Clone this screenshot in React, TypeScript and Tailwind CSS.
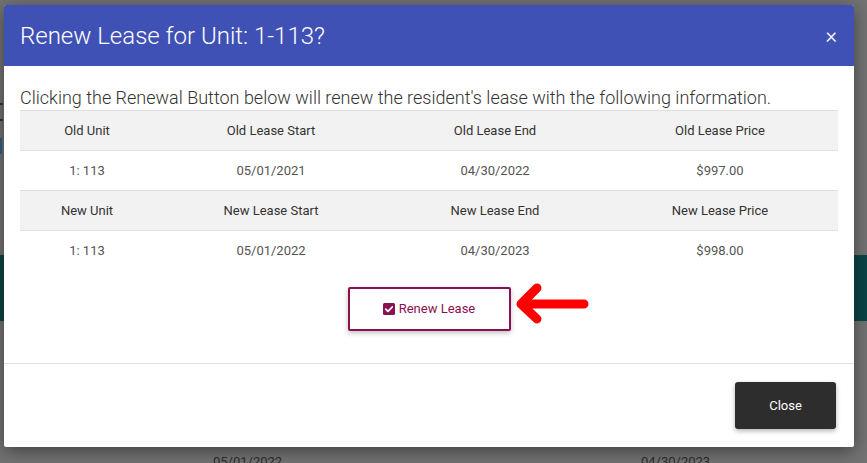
const oldRow = ['1: 113', '05/01/2021', '04/30/2022', '$997.00']
const newRow = ['1: 113', '05/01/2022', '04/30/2023', '$998.00']

function HeadRow({ cells }: { cells: string[] }) {
  return (
    <div className="grid grid-cols-[134px_234px_214px_236px] h-[40px] bg-[#f2f2f2] border-t border-[#dee0e6] items-center text-[13px] text-[#333]">
      {cells.map((c) => (
        <div key={c} className="text-center">{c}</div>
      ))}
    </div>
  )
}

function DataRow({ cells }: { cells: string[] }) {
  return (
    <div className="grid grid-cols-[134px_234px_214px_236px] h-[40px] border-t border-[#dee0e6] items-center text-[13px] text-[#555]">
      {cells.map((c, i) => (
        <div key={i} className="text-center">{c}</div>
      ))}
    </div>
  )
}

export default function App() {
  return (
    <div
      className="relative w-[867px] h-[463px] overflow-hidden bg-[#737373]"
      style={{ fontFamily: 'Roboto, "Liberation Sans", sans-serif' }}
    >
      {/* page behind the overlay */}
      <div className="absolute left-0 right-0 top-[255px] h-[66px] bg-[#0b4447]" />
      <div className="absolute left-0 top-[103px] w-[3px] h-[2px] bg-[#333]" />
      <div className="absolute left-0 top-[119px] w-[3px] h-[2px] bg-[#333]" />
      <div className="absolute left-0 top-[138px] w-[2px] h-[16px] bg-[#2f5f8a]" />
      <div className="absolute left-[213px] top-[452px] text-[13px] text-[#2c2c2c]">05/01/2022</div>
      <div className="absolute left-[641px] top-[452px] text-[13px] text-[#2c2c2c]">04/30/2023</div>

      {/* modal */}
      <div className="absolute left-[4px] top-[5px] w-[850px] h-[442px] bg-white rounded-[2px] shadow-[0_4px_18px_rgba(0,0,0,0.45)] flex flex-col overflow-hidden">
        <div className="h-[61px] bg-[#3f51b5] flex items-center justify-between pl-[16px] pr-[17px]">
          <h2 className="text-[24px] font-light text-white leading-none">Renew Lease for Unit: 1-113?</h2>
          <span className="text-white text-[22px] font-light leading-none">×</span>
        </div>

        <div className="px-[16px] pt-[20px] h-[298px] border-b border-[#dee0e6]">
          <p className="text-[18px] font-light text-[#333] leading-[24px]">
            Clicking the Renewal Button below will renew the resident's lease with the following information.
          </p>
          <div className="w-[818px]">
            <HeadRow cells={['Old Unit', 'Old Lease Start', 'Old Lease End', 'Old Lease Price']} />
            <DataRow cells={oldRow} />
            <HeadRow cells={['New Unit', 'New Lease Start', 'New Lease End', 'New Lease Price']} />
            <DataRow cells={newRow} />
          </div>
          <div className="flex justify-center mt-[17px] relative">
            <button className="w-[163px] h-[44px] border-2 border-[#8a1052] rounded-[2px] shadow-[0_2px_5px_rgba(0,0,0,0.25)] flex items-center justify-center gap-[4px] text-[13px] text-[#8a1052] bg-white">
              <svg width="12" height="12" viewBox="0 0 12 12">
                <rect width="12" height="12" rx="1.5" fill="#8a1052" />
                <path d="M2.8 6.2l2.2 2.2 4.2-4.4" stroke="#fff" strokeWidth="1.8" fill="none" strokeLinecap="round" strokeLinejoin="round" />
              </svg>
              Renew Lease
            </button>
            {/* annotation arrow */}
            <svg className="absolute left-[480px] top-[-8px]" width="92" height="52" viewBox="0 0 92 52">
              <path
                d="M84 25H22M37 9L21 25l16 15"
                stroke="#f00"
                strokeWidth="9"
                fill="none"
                strokeLinecap="round"
                strokeLinejoin="round"
              />
            </svg>
          </div>
        </div>

        <div className="flex-1 flex justify-end items-start pt-[18px] pr-[18px]">
          <button className="w-[101px] h-[47px] bg-[#2d2d2d] rounded-[3px] shadow-[0_2px_5px_rgba(0,0,0,0.3)] text-white text-[13px]">
            Close
          </button>
        </div>
      </div>
    </div>
  )
}
